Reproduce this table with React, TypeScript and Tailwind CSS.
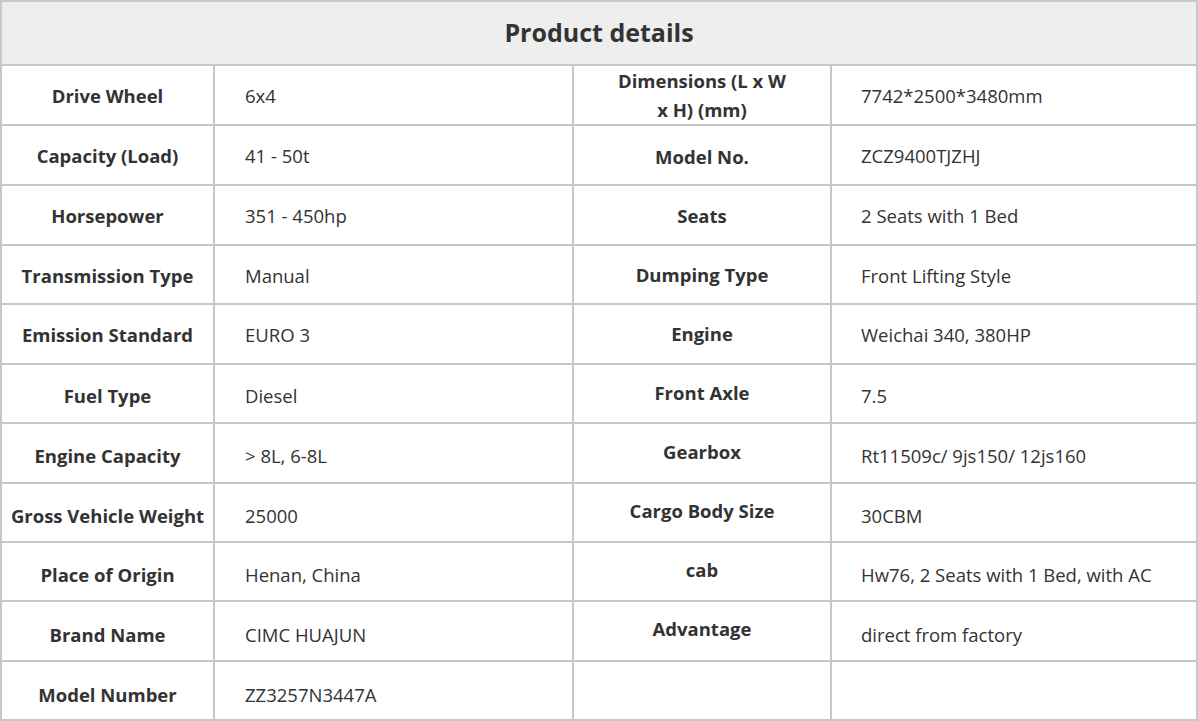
// [label, value, label, value, row height, value shift, right label shift]
const rows: [string, string, string, string, number, string, string][] = [
  ['Drive Wheel', '6x4', 'Dimensions (L x W x H) (mm)', '7742*2500*3480mm', 60, 'pt-[2px]', 'pt-0'],
  ['Capacity (Load)', '41 - 50t', 'Model No.', 'ZCZ9400TJZHJ', 60, 'pt-[2px]', 'pt-[2px]'],
  ['Horsepower', '351 - 450hp', 'Seats', '2 Seats with 1 Bed', 60, 'pt-[2px]', 'pt-0'],
  ['Transmission Type', 'Manual', 'Dumping Type', 'Front Lifting Style', 59, 'pt-[2px]', 'pt-0'],
  ['Emission Standard', 'EURO 3', 'Engine', 'Weichai 340, 380HP', 60, 'pt-[2px]', 'pb-[2px]'],
  ['Fuel Type', 'Diesel', 'Front Axle', '7.5', 59, 'pt-[4px]', 'pb-[3px]'],
  ['Engine Capacity', '> 8L, 6-8L', 'Gearbox', 'Rt11509c/ 9js150/ 12js160', 60, 'pt-[6px]', 'pb-[4px]'],
  ['Gross Vehicle Weight', '25000', 'Cargo Body Size', '30CBM', 59, 'pt-[6px]', 'pb-[5px]'],
  ['Place of Origin', 'Henan, China', 'cab', 'Hw76, 2 Seats with 1 Bed, with AC', 59, 'pt-[6px]', 'pb-[5px]'],
  ['Brand Name', 'CIMC HUAJUN', 'Advantage', 'direct from factory', 60, 'pt-[8px]', 'pb-[6px]'],
  ['Model Number', 'ZZ3257N3447A', '', '', 59, 'pt-[8px]', 'pt-0'],
];

export default function App() {
  return (
    <div className="bg-white font-['Open_Sans',sans-serif] text-[#333333]">
      <table className="w-[1196px] table-fixed border-collapse border-2 border-[#c8c8c8]">
        <colgroup>
          <col className="w-[213px]" />
          <col className="w-[359px]" />
          <col className="w-[258px]" />
          <col className="w-[366px]" />
        </colgroup>
        <thead>
          <tr>
            <th
              colSpan={4}
              className="h-[64px] border-2 border-[#c8c8c8] bg-[#eeeeee] text-center text-[25px] font-bold">
              Product details
            </th>
          </tr>
        </thead>
        <tbody>
          {rows.map(([l1, v1, l2, v2, h, shift, labelShift]) => (
            <tr key={l1} style={{height: h}}>
              <th
                className={`border-2 border-[#c8c8c8] px-0 text-center text-[18.5px] font-bold ${shift}`}>
                {l1}
              </th>
              <td
                className={`border-2 border-[#c8c8c8] pl-[30px] text-left text-[18.5px] font-normal ${shift}`}>
                {v1}
              </td>
              <th
                className={`border-2 border-[#c8c8c8] px-10 text-center text-[18.5px] font-bold leading-[29px] ${labelShift}`}>
                {l2}
              </th>
              <td
                className={`border-2 border-[#c8c8c8] pl-[29px] text-left text-[18.5px] font-normal ${shift}`}>
                {v2}
              </td>
            </tr>
          ))}
        </tbody>
      </table>
    </div>
  );
}
